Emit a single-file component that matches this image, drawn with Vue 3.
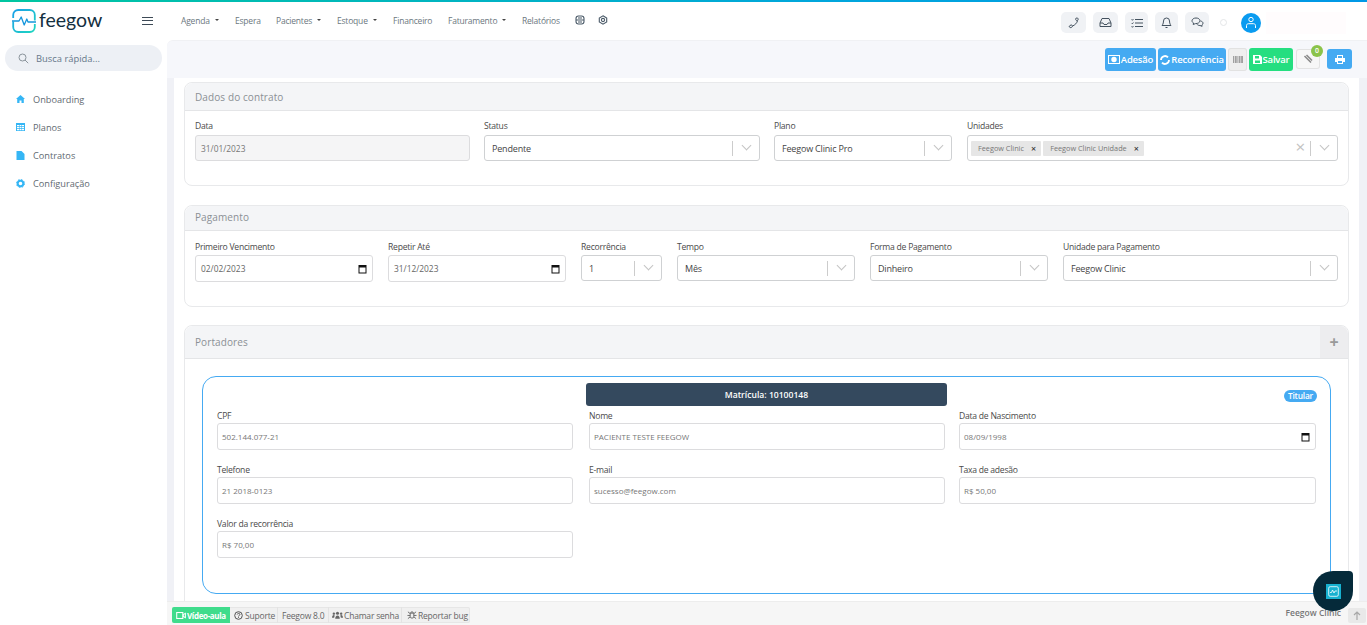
<script setup>
const nav = [
  { t: 'Agenda', c: true, w: 54 },
  { t: 'Espera', w: 41 },
  { t: 'Pacientes', c: true, w: 61 },
  { t: 'Estoque', c: true, w: 56 },
  { t: 'Financeiro', w: 55 },
  { t: 'Faturamento', c: true, w: 74 },
  { t: 'Relatórios', w: 53 },
]
const menu = ['Onboarding', 'Planos', 'Contratos', 'Configuração']
const pay = [
  { l: 'Primeiro Vencimento', v: '02/02/2023', w: 178, k: 'date' },
  { l: 'Repetir Até', v: '31/12/2023', w: 178, k: 'date' },
  { l: 'Recorrência', v: '1', w: 81, k: 'sel' },
  { l: 'Tempo', v: 'Mês', w: 178, k: 'sel' },
  { l: 'Forma de Pagamento', v: 'Dinheiro', w: 178, k: 'sel' },
  { l: 'Unidade para Pagamento', v: 'Feegow Clinic', w: 275, k: 'sel' },
]
const holder = [
  { l: 'CPF', v: '502.144.077-21' },
  { l: 'Nome', v: 'PACIENTE TESTE FEEGOW' },
  { l: 'Data de Nascimento', v: '08/09/1998', date: true },
  { l: 'Telefone', v: '21 2018-0123' },
  { l: 'E-mail', v: 'sucesso@feegow.com' },
  { l: 'Taxa de adesão', v: 'R$ 50,00' },
  { l: 'Valor da recorrência', v: 'R$ 70,00' },
]
</script>

<template>
  <div class="page">
    <div class="stripe"></div>
    <header class="top">
      <div class="brand">
        <svg class="logo" width="24" height="24" viewBox="0 0 24 24" fill="none">
          <defs>
            <linearGradient id="lg" x1="0" y1="0" x2="1" y2="1">
              <stop offset="0" stop-color="#1aa0e8" />
              <stop offset="1" stop-color="#1fd6c0" />
            </linearGradient>
          </defs>
          <path d="M1.2 9V6a5 5 0 0 1 5-5h11.6a5 5 0 0 1 5 5v5.5M22.8 15v3a5 5 0 0 1-5 5H6.2a5 5 0 0 1-5-5v-5.5" stroke="url(#lg)" stroke-width="1.8" />
          <path d="M0 12h7l2.2-4 3 8 2.6-6 1.2 3H24" stroke="#1596dc" stroke-width="1.3" stroke-linejoin="round" />
        </svg>
        <span class="word">feegow</span>
      </div>
      <div class="burger"><i></i><i></i><i></i></div>
      <nav class="nav">
        <a v-for="n in nav" :key="n.t" :style="{ width: n.w + 'px' }">{{ n.t }}<b v-if="n.c"></b></a>
        <svg class="ni" width="10" height="10" viewBox="0 0 10 10" fill="none" stroke="#4a5a68" stroke-width="1.1">
          <rect x="1" y="1" width="8" height="8" rx="2.5" /><path d="M1 5h8M3 3h4M3 7h4" />
        </svg>
        <svg class="ni second" width="10" height="10" viewBox="0 0 10 10" fill="none" stroke="#4a5a68" stroke-width="1.1">
          <path d="M5 .8 8.700 3v4L5 9.200 1.300 7V3z" /><circle cx="5" cy="5" r="1.600" />
        </svg>
      </nav>
      <div class="tools">
        <span class="tool w25">
          <svg width="12" height="12" viewBox="0 0 12 12" fill="none" stroke="#44525f" stroke-width="1"><path d="M2 8.500c1.500-1 2.500-.3 2.500.6S3 11 2 10.500 1 9 2 8.500zM8 1.200c1.500-.6 2.500.3 2.200 1.300S8.500 4 8 3.200 7.400 1.500 8 1.200z" /><path d="M4.600 9C7 8 9 6 9.600 3.600" /></svg>
        </span>
        <span class="tool w25">
          <svg width="13" height="11" viewBox="0 0 13 11" fill="none" stroke="#44525f" stroke-width="1"><path d="M1 6 3 1.500h7L12 6v3.500H1zM1 6h3l1 1.500h3L9 6h3" /></svg>
        </span>
        <span class="tool w23">
          <svg width="12" height="10" viewBox="0 0 12 10" fill="none" stroke="#44525f" stroke-width="1"><path d="M4 1.500h8M4 5h8M4 8.500h8M.6 1.500l.8.8 1-1.300M.6 5l.8.8 1-1.300M.6 8.500l.8.8 1-1.300" /></svg>
        </span>
        <span class="tool w23">
          <svg width="11" height="12" viewBox="0 0 11 12" fill="none" stroke="#44525f" stroke-width="1"><path d="M5.500 1a3 3 0 0 1 3 3c0 3 1.500 4.500 1.500 4.500H1S2.500 7 2.500 4a3 3 0 0 1 3-3zM4.500 10.500h2" /></svg>
        </span>
        <span class="tool w24">
          <svg width="13" height="11" viewBox="0 0 13 11" fill="none" stroke="#44525f" stroke-width="1"><path d="M5 1C2.800 1 1 2.200 1 3.800c0 .9.6 1.700 1.500 2.200L2.200 7.500 4.500 6.600C7 6.600 9 5.500 9 3.800S7.200 1 5 1z" /><path d="M9.600 4c1.500.3 2.400 1.200 2.400 2.200 0 .8-.5 1.400-1.200 1.800l.3 1.300L9 8.500c-1.200 0-2.500-.4-3-1.200" /></svg>
        </span>
        <span class="spin"></span>
        <span class="avatar">
          <svg width="12" height="13" viewBox="0 0 12 13" fill="none" stroke="#fff" stroke-width="1"><circle cx="6" cy="3.500" r="2.200" /><path d="M1.500 12V9.500c0-1.200 1-1.800 2-1.800h5c1 0 2 .6 2 1.800V12" /></svg>
        </span>
        <span class="ghost"></span>
      </div>
    </header>

    <div class="body">
      <aside class="side">
        <div class="search">
          <svg width="11" height="11" viewBox="0 0 11 11" fill="none" stroke="#8b949c" stroke-width="1"><circle cx="4.500" cy="4.500" r="3.500" /><path d="m7 7 3.200 3.200" /></svg>
          <span>Busca rápida...</span>
        </div>
        <ul class="menu">
          <li v-for="(m, i) in menu" :key="m">
            <svg v-if="i === 0" width="9" height="8" viewBox="0 0 9 8" fill="#35b6f5"><path d="M4.500 0 9 4H7.800v4H5.500V5.500h-2V8H1.200V4H0z" /></svg>
            <svg v-else-if="i === 1" width="9" height="8" viewBox="0 0 9 8" fill="#35b6f5"><path fill-rule="evenodd" d="M0 0h9v8H0zM1 2v1.300h2V2zm2.500 0v1.300h2V2zM6 2v1.300h2V2zM1 4v1.300h2V4zm2.500 0v1.300h2V4zM6 4v1.300h2V4zM1 6v1.300h2V6zm2.500 0v1.300h2V6zM6 6v1.300h2V6z" /></svg>
            <svg v-else-if="i === 2" width="9" height="9" viewBox="0 0 9 9" fill="#35b6f5"><path d="M.5 0h5l3 3v6H.5z" /></svg>
            <svg v-else width="9" height="9" viewBox="0 0 9 9"><circle cx="4.500" cy="4.500" r="2.800" fill="none" stroke="#35b6f5" stroke-width="2" /><circle cx="4.500" cy="4.500" r="4" fill="none" stroke="#35b6f5" stroke-width="1" stroke-dasharray="1.600 1.540" /></svg>
            <span>{{ m }}</span>
          </li>
        </ul>
      </aside>

      <div class="content">
        <div class="actions">
          <button class="btn blue w51">
            <svg width="12" height="9" viewBox="0 0 12 9" fill="#fff"><path fill-rule="evenodd" d="M0 0h12v9H0zm1 1v7h10V1zm5 .8a2.700 2.700 0 1 1 0 5.400 2.700 2.700 0 0 1 0-5.400z" /></svg>Adesão
          </button>
          <button class="btn blue w68">
            <svg width="10" height="10" viewBox="0 0 10 10" fill="none" stroke="#fff" stroke-width="1.800"><path d="M1 5a4 4 0 0 1 7-2.600M9 5a4 4 0 0 1-7 2.600" /></svg>Recorrência
          </button>
          <button class="btn gray w19">
            <svg width="10" height="7" viewBox="0 0 10 7" fill="#a0a0a0"><path d="M0 0h1v7H0zM1.700 0h2v7h-2zM4.400 0h.8v7h-.8zM5.800 0h1.700v7H5.800zM8.100 0H10v7H8.100z" /></svg>
          </button>
          <button class="btn green w44">
            <svg width="9" height="9" viewBox="0 0 9 9" fill="#fff"><path fill-rule="evenodd" d="M0 0h7l2 2v7H0zm2 1v2.500h4V1zm0 4.500V8h5V5.500z" /></svg>Salvar
          </button>
          <button class="btn clip">
            <svg width="10" height="10" viewBox="0 0 10 10" fill="none" stroke="#8a8a8a" stroke-width="1.600"><path d="M1.500 2 8 8.500" /><path d="M3.500 1 9 6.500" /></svg>
            <em class="badge">0</em>
          </button>
          <button class="btn print">
            <svg width="10" height="9" viewBox="0 0 10 9" fill="#fff"><path fill-rule="evenodd" d="M2 0h6v3h2v4H8v2H2V7H0V3h2zm1 1v2h4V1zm0 5v2h4V6z" /></svg>
          </button>
        </div>

        <div class="scroll">
          <div class="main">
            <section class="panel p1">
              <h3 class="ph ph1">Dados do contrato</h3>
              <div class="row row1">
                <div class="f" style="width: 275px">
                  <label>Data</label>
                  <div class="inp ro">31/01/2023</div>
                </div>
                <div class="f" style="width: 276px">
                  <label>Status</label>
                  <div class="inp sel"><span>Pendente</span><i class="sep"></i><i class="chev"></i></div>
                </div>
                <div class="f" style="width: 178px">
                  <label>Plano</label>
                  <div class="inp sel"><span>Feegow Clinic Pro</span><i class="sep"></i><i class="chev"></i></div>
                </div>
                <div class="f unid" style="width: 371px">
                  <label>Unidades</label>
                  <div class="inp sel multi">
                    <span class="tag">Feegow Clinic<b>×</b></span>
                    <span class="tag">Feegow Clinic Unidade<b>×</b></span>
                    <span class="clear">×</span>
                    <i class="sep"></i><i class="chev"></i>
                  </div>
                </div>
              </div>
            </section>

            <section class="panel p2">
              <h3 class="ph ph2">Pagamento</h3>
              <div class="row row2">
                <div v-for="p in pay" :key="p.l" class="f" :style="{ width: p.w + 'px' }">
                  <label>{{ p.l }}</label>
                  <div v-if="p.k === 'date'" class="inp dt">
                    <span>{{ p.v }}</span>
                    <svg class="cal" width="9" height="10" viewBox="0 0 9 10"><path fill-rule="evenodd" d="M.5 1h8v8.500h-8zm1 2.500v5h6v-5z" fill="#111" /></svg>
                  </div>
                  <div v-else class="inp sel"><span>{{ p.v }}</span><i class="sep"></i><i class="chev"></i></div>
                </div>
              </div>
            </section>

            <section class="panel p3">
              <div class="ph3">
                <h3>Portadores</h3>
                <span class="plus">+</span>
              </div>
              <div class="p3body">
                <div class="card">
                  <div class="mat">Matrícula: 10100148</div>
                  <span class="tit">Titular</span>
                  <div class="cgrid">
                    <div v-for="h in holder" :key="h.l" class="f">
                      <label>{{ h.l }}</label>
                      <div class="inp small">
                        <span>{{ h.v }}</span>
                        <svg v-if="h.date" class="cal" width="9" height="10" viewBox="0 0 9 10"><path fill-rule="evenodd" d="M.5 1h8v8.500h-8zm1 2.500v5h6v-5z" fill="#111" /></svg>
                      </div>
                    </div>
                  </div>
                </div>
              </div>
            </section>
          </div>
        </div>

        <footer class="foot">
          <div class="fbtns">
            <span class="fb vid">
              <svg width="10" height="7" viewBox="0 0 11 8" fill="none" stroke="#fff" stroke-width="1.200"><rect x=".6" y=".6" width="7" height="6.800" /><path d="m8 3 2.500-1.500v5L8 5z" /></svg>Vídeo-aula
            </span>
            <span class="fb f48">
              <svg width="9" height="9" viewBox="0 0 9 9" fill="none" stroke="#555" stroke-width="1"><circle cx="4.500" cy="4.500" r="3.800" /><path d="M3.200 3.500c.2-1.500 2.700-1.500 2.700 0 0 1-1.400 1-1.400 2M4.500 6.200v.8" /></svg>Suporte
            </span>
            <span class="fb f51">Feegow 8.0</span>
            <span class="fb f73">
              <svg width="11" height="9" viewBox="0 0 12 9" fill="#666"><circle cx="6" cy="2" r="1.700" /><circle cx="2" cy="2.500" r="1.300" /><circle cx="10" cy="2.500" r="1.300" /><path d="M3.500 8c0-2 1-3.500 2.500-3.500S8.500 6 8.500 8zM0 7c0-1.500.8-3 2-3l1 .5-.7 2.500zM12 7c0-1.500-.8-3-2-3l-1 .5.7 2.500z" /></svg>Chamar senha
            </span>
            <span class="fb f68">
              <svg width="10" height="10" viewBox="0 0 11 10" fill="none" stroke="#666" stroke-width="1"><path d="M3.500 3h4v3.500a2 2 0 0 1-4 0zM4 3a1.500 1.500 0 0 1 3 0M1 1.500 3.500 3.500M10 1.500 7.500 3.500M.5 5.500h3M7.500 5.500h3M1 9l2.500-2M10 9 7.500 7" /></svg>Reportar bug
            </span>
          </div>
          <span class="unit">Feegow Clinic</span>
          <span class="up">
            <svg width="8" height="9" viewBox="0 0 8 9" fill="none" stroke="#a8a8a8" stroke-width="1.200"><path d="M4 9V1M1 4l3-3 3 3" /></svg>
          </span>
        </footer>
      </div>
    </div>

    <div class="fab">
      <span class="fabi">
        <svg width="11" height="11" viewBox="0 0 11 11" fill="none" stroke="#fff" stroke-width=".8"><rect x=".7" y=".7" width="9.600" height="9.600" rx="1.500" /><path d="M2 6.500h1.500l1-2.500 1.500 3 1-2H9" /></svg>
      </span>
    </div>
  </div>
</template>

<style scoped>
.page {
  position: relative;
  width: 1367px;
  height: 625px;
  overflow: hidden;
  display: flex;
  flex-direction: column;
  background: #fff;
  font-family: "Open Sans", "Liberation Sans", sans-serif;
  color: #555;
}
.stripe { height: 2px; background: linear-gradient(90deg, #00c6a0, #00a6dc 60%, #0098e6); flex: none; }
.top { height: 38px; flex: none; display: flex; align-items: center; background: #fff; }
.brand { width: 135px; padding-left: 12px; display: flex; align-items: center; box-sizing: border-box; }
.logo { flex: none; margin-top: -1px; }
.word { font-family: "Lato", sans-serif; font-size: 19.5px; color: #14303f; margin-left: 3px; line-height: 24px; margin-top: -3px; }
.burger { width: 11px; margin-left: 7px; margin-top: -1px; display: flex; flex-direction: column; gap: 2.5px; }
.burger i { display: block; height: 1px; background: #3d4a56; }
.nav { display: flex; align-items: center; margin-left: 28px; font-size: 8.5px; letter-spacing: -0.2px; color: #6c7780; height: 100%; margin-top: -2px; }
.nav a { display: flex; align-items: center; white-space: nowrap; flex: none; }
.nav b { width: 0; height: 0; border: 2px solid transparent; border-top-color: #444; border-bottom: 0; margin-left: 5px; }
.ni { flex: none; margin-left: 0; }
.ni.second { margin-left: 13px; }
.tools { position: absolute; left: 1061px; top: 12px; display: flex; align-items: center; gap: 7px; height: 21px; }
.tool { height: 21px; border-radius: 5px; background: #f0f2f5; display: flex; align-items: center; justify-content: center; }
.w25 { width: 25px; } .w23 { width: 23px; } .w24 { width: 24px; }
.spin { width: 5px; height: 5px; border: 1px solid #e4e6e8; border-radius: 50%; margin-left: 4px; }
.avatar { width: 20px; height: 20px; border-radius: 50%; background: #0a9bf0; display: flex; align-items: center; justify-content: center; margin-left: 7px; }
.ghost { width: 80px; height: 22px; background: #fffcfd; margin-left: -2px; }

.body { flex: 1; display: flex; min-height: 0; }
.side { width: 167px; flex: none; padding: 5px 5px 0; box-sizing: border-box; background: #fff; }
.search { height: 26px; width: 157px; border-radius: 13px; background: #edf0f5; display: flex; align-items: center; padding-left: 13px; gap: 7px; box-sizing: border-box; font-size: 9.4px; color: #66788a; }
.menu { list-style: none; margin: 14px 0 0; padding: 0; }
.menu li { height: 28px; display: flex; align-items: center; padding-left: 11px; font-size: 9.2px; color: #5f6a72; }
.menu svg { flex: none; }
.menu span { margin-left: 8px; }

.content { flex: 1; min-width: 0; display: flex; flex-direction: column; }
.actions { height: 38px; flex: none; background: #f6f7fb; border-top: 1px solid #f0f1f4; box-sizing: border-box; border-top-left-radius: 6px; display: flex; align-items: flex-start; padding-top: 7px; padding-left: 938px; gap: 2px; }
.btn { height: 23px; border: 0; border-radius: 3px; padding: 0; display: flex; align-items: center; justify-content: center; gap: 1px; font-family: inherit; font-size: 9.5px; font-weight: 600; color: #fff; flex: none; letter-spacing: -0.2px; }
.blue { background: #45aaf2; }
.w51 { width: 51px; } .w68 { width: 68px; } .w19 { width: 19px; } .w44 { width: 44px; }
.gray { background: #efefef; box-shadow: 0 0 0 1px #e2e2e2 inset; }
.green { background: #25de80; }
.clip { position: relative; width: 24px; height: 20px; margin: 1px 0 0 1px; background: #f7f7f7; box-shadow: 0 0 0 1px #e3e3e3 inset; }
.badge { position: absolute; right: -3px; top: -4px; width: 12px; height: 12px; border-radius: 50%; background: #8bc34a; font-style: normal; font-size: 7px; line-height: 12px; text-align: center; color: #fff; }
.print { width: 25px; height: 20px; margin: 1px 0 0 5px; background: #45aaf2; }

.scroll { flex: 1; min-height: 0; overflow: hidden; background: #f0f1f6; padding: 0 8px 0 7px; }
.main { height: 100%; background: #fff; padding: 4px 10px 0; box-sizing: border-box; overflow: hidden; }
.panel { border: 1px solid #e8e9eb; border-radius: 8px; box-sizing: border-box; background: #fff; }
.p1 { height: 104px; margin-bottom: 19px; }
.p2 { height: 102px; margin-bottom: 18px; }
.p3 { height: 300px; position: relative; }
.ph { margin: 0; padding-left: 10px; font-size: 10px; font-weight: 400; letter-spacing: .1px; color: #8b9095; background: #f4f5f7; border-bottom: 1px solid #e4e5e7; border-radius: 8px 8px 0 0; display: flex; align-items: center; box-sizing: border-box; }
.ph1 { height: 28px; }
.ph2 { height: 25px; padding-bottom: 2px; }
.row { display: flex; padding: 0 10px; gap: 15px; }
.row1 { padding-top: 9px; gap: 14px; }
.row2 { padding-top: 10px; }
.unid { margin-left: 1px; }
.f label { display: block; font-size: 8.6px; letter-spacing: -0.25px; line-height: 12px; color: #4a4a4a; font-weight: 400; margin-bottom: 3px; }
.row2 label { margin-bottom: 2px; }
.inp { height: 27px; box-sizing: border-box; border: 1px solid #cfd1d3; border-radius: 3px; display: flex; align-items: center; font-size: 9px; letter-spacing: -0.18px; color: #444; padding-left: 7px; background: #fff; position: relative; }
.row1 .inp { height: 26px; }
.row2 .sel { height: 26px; margin-top: 1px; }
.ro { background: #f5f5f6; border-color: #dcdcde; color: #777; font-size: 8.4px; letter-spacing: 0; padding-left: 5px; }
.dt { border-color: #dcdcde; font-size: 8.4px; letter-spacing: 0; color: #666; padding-left: 5px; }
.cal { position: absolute; right: 5px; top: 8px; }
.sep { position: absolute; right: 26px; top: 5px; height: 15px; width: 1px; background: #ccc; }
.chev { position: absolute; right: 9px; top: 6px; width: 6px; height: 6px; border-right: 1px solid #c4c4c4; border-bottom: 1px solid #c4c4c4; transform: rotate(45deg); }
.multi { padding-left: 3px; gap: 2px; }
.tag { height: 15px; background: #e6e6e6; color: #777; font-size: 7.3px; letter-spacing: 0; display: flex; align-items: center; padding-left: 7px; border-radius: 1px; }
.tag b { color: #333; font-size: 9px; margin: 0 5px 0 7px; font-weight: 600; }
.clear { position: absolute; right: 32px; top: 2px; color: #c2c2c2; font-size: 17px; line-height: 18px; }

.ph3 { height: 33px; display: flex; align-items: stretch; justify-content: space-between; background: #f4f5f7; border-bottom: 1px solid #e4e5e7; border-radius: 8px 8px 0 0; box-sizing: border-box; }
.ph3 h3 { margin: 0 0 0 10px; font-size: 10px; font-weight: 400; letter-spacing: .1px; color: #8b9095; display: flex; align-items: center; }
.plus { width: 28px; background: #ededef; border-top-right-radius: 8px; color: #999; font-size: 16px; font-weight: 700; display: flex; align-items: center; justify-content: center; }
.p3body { padding: 17px 17px 0; }
.card { position: relative; height: 218px; box-sizing: border-box; border: 1px solid #45aaf2; border-radius: 14px; padding: 33px 14px 0; }
.mat { position: absolute; left: 383px; top: 6px; width: 361px; height: 23px; background: #34495e; color: #fff; border-radius: 3px; font-size: 8.6px; font-weight: 600; display: flex; align-items: center; justify-content: center; }
.tit { position: absolute; right: 13px; top: 13px; height: 12px; padding: 0 4px; border-radius: 6px; background: #45aaf2; color: #fff; font-size: 8.4px; font-weight: 600; line-height: 12px; letter-spacing: -0.2px; }
.cgrid { display: grid; grid-template-columns: 372px 370px 357px; row-gap: 14px; }
.cgrid .f:not(:nth-child(3n)) { width: 356px; }
.cgrid label { margin-bottom: 0; line-height: 13px; }
.small { font-size: 8px; letter-spacing: 0; color: #777; padding-left: 4px; border-color: #dcdcde; }

.foot { height: 24px; flex: none; background: #f6f6f6; border-top: 1px solid #ededed; box-sizing: border-box; display: flex; align-items: flex-start; padding: 5px 1px 0 5px; position: relative; z-index: 1; }
.fbtns { display: flex; height: 16px; background: #f0f0f0; border-radius: 2px; box-shadow: 0 0 0 1px #e6e6e6 inset; }
.fb { display: flex; align-items: center; gap: 2px; padding: 0 0 0 4px; box-sizing: border-box; font-size: 8.5px; letter-spacing: -0.2px; color: #666; border-right: 1px solid #e3e3e3; white-space: nowrap; }
.fb:last-child { border-right: 0; }
.f48 { width: 48px; } .f51 { width: 51px; } .f73 { width: 73px; padding-left: 3px; gap: 1px; } .f68 { width: 68px; padding-left: 5px; gap: 1px; }
.vid { background: #3fdc8c; color: #fff; font-weight: 700; border-radius: 2px 0 0 2px; border: 0; font-size: 8px; letter-spacing: -0.35px; width: 58px; padding-left: 4px; gap: 1px; }
.unit { margin-left: auto; font-size: 8.5px; font-weight: 600; color: #777; }
.up { width: 18px; height: 15px; margin: 1px 0 0 7px; background: #e9e9e9; display: flex; align-items: center; justify-content: center; border-radius: 2px; }

.fab { position: absolute; left: 1313px; top: 571px; width: 40px; height: 40px; background: #052a3a; border-radius: 50% 4px 50% 50%; display: flex; align-items: center; justify-content: center; z-index: 2; }
.fabi { width: 15px; height: 15px; background: #17b1d0; display: flex; align-items: center; justify-content: center; }
</style>
